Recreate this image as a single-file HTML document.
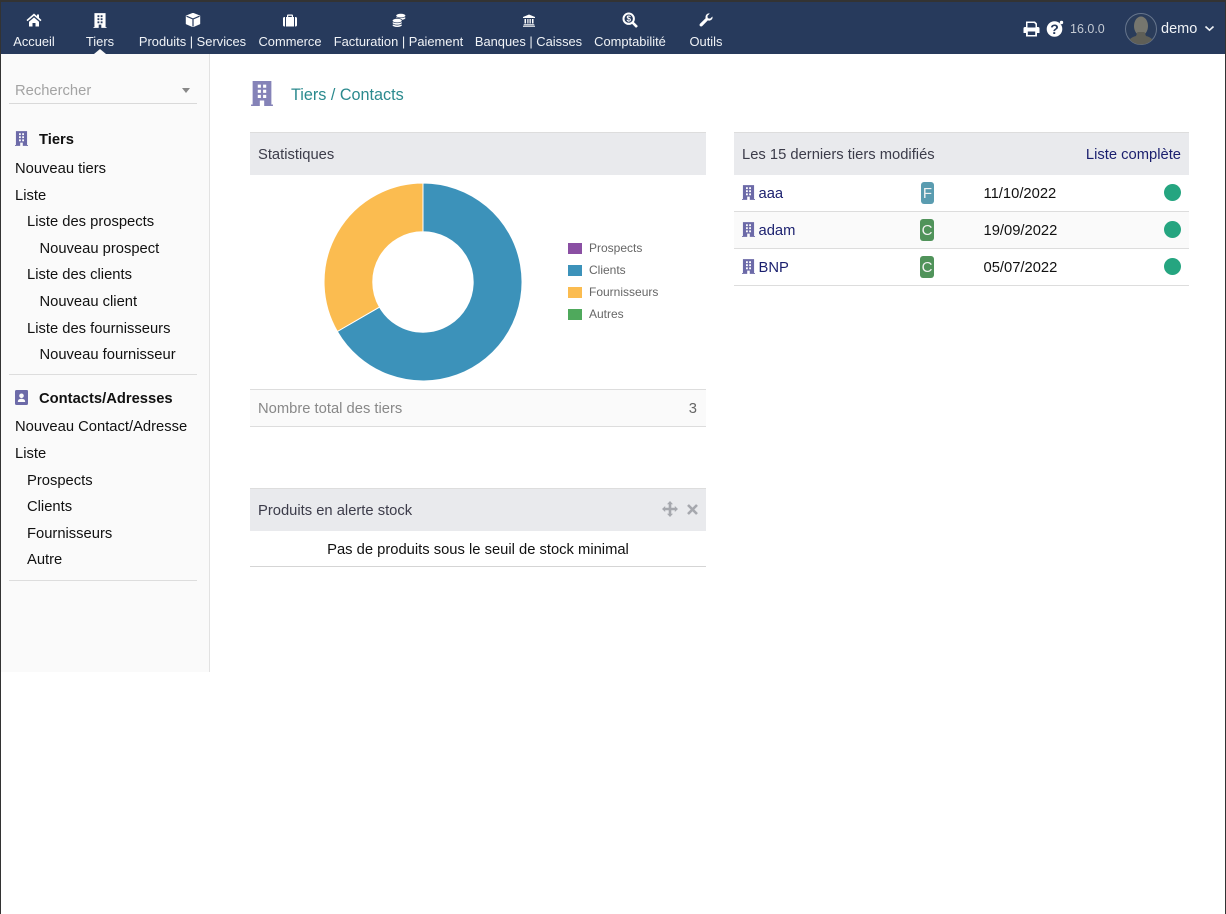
<!DOCTYPE html>
<html lang="fr"><head><meta charset="utf-8"><title>Tiers / Contacts</title>
<style>
html,body{margin:0;padding:0;background:#fff}
body{width:1226px;height:914px;position:relative;overflow:hidden;font-family:"Liberation Sans",sans-serif;font-size:14.75px;color:#111}
.a{position:absolute;white-space:nowrap}
.t{position:absolute;white-space:nowrap;line-height:20px}
.n{position:absolute;top:34px;line-height:16px;font-size:12.9px;color:#f0f3f7;text-align:center;transform:translateX(-50%);white-space:nowrap}
.i{position:absolute;top:12px;transform:translateX(-50%)}
.l{position:absolute;height:1px;background:#ddd}
.b{color:#1a1f6e}
svg{display:block}
</style></head><body>
<svg width="0" height="0" style="position:absolute"><defs>
<symbol id="bld" viewBox="0 0 14 16"><path fill-rule="evenodd" d="M1 0H13V15H14V16H0V15H1ZM4.300 2.300V4.300H6.300V2.300ZM7.700 2.300V4.300H9.700V2.300ZM4.300 5.600V7.600H6.300V5.600ZM7.700 5.600V7.600H9.700V5.600ZM4.300 8.900V10.900H6.300V8.900ZM7.700 8.900V10.900H9.700V8.900ZM5.600 12.500V16H8.400V12.500Z"/></symbol>
</defs></svg>

<!-- frame -->
<div class="a" style="left:0;top:0;width:1226px;height:54px;background:#273a5c"></div>
<div class="a" style="left:0;top:0;width:1226px;height:2px;background:#333"></div>
<div class="a" style="left:1px;top:54px;width:208px;height:618px;background:#fafafa"></div>
<div class="a" style="left:209px;top:54px;width:1px;height:618px;background:#e2e2e2"></div>
<div class="a" style="left:0;top:0;width:1px;height:914px;background:#333"></div>
<div class="a" style="left:1225px;top:0;width:1px;height:914px;background:#333"></div>

<!-- nav icons -->
<svg class="i" style="left:34px" width="16" height="16" viewBox="0 0 16 16" fill="#fff"><path d="M8 1.500L0.500 8 1.500 9.200 8 3.700 14.500 9.200 15.500 8 13 5.800V2.500H11V4.100ZM3 9.800L8 5.400 13 9.800V14.500H9.500V11H6.500V14.500H3Z"/></svg>
<svg class="i" style="left:100px;top:13px;fill:#fff" width="13" height="15"><use href="#bld"/></svg>
<svg class="i" style="left:192.500px;top:13px" width="15" height="14" viewBox="0 0 15 14"><path d="M7.500 0.300L14.200 3V10.800L7.500 13.700 0.800 10.800V3Z" fill="#fff" stroke="#fff" stroke-linejoin="round"/><path d="M1 3.200L7.500 6 14 3.200M7.500 6V13.500" fill="none" stroke="#273a5c" stroke-width="1.200"/></svg>
<svg class="i" style="left:290px;top:14px" width="14" height="13" viewBox="0 0 14 13" fill="#fff"><path fill-rule="evenodd" d="M4 3V1.500Q4 0.500 5 0.500H9Q10 0.500 10 1.500V3H11V12.500H3V3ZM5.200 1.700V3H8.800V1.700ZM0 4.500Q0 3 1.500 3H2V12.500H1.500Q0 12.500 0 11ZM12 3H12.500Q14 3 14 4.500V11Q14 12.500 12.500 12.500H12Z"/></svg>
<svg class="i" style="left:398.500px;top:13px" width="14" height="15" viewBox="0 0 14 15" fill="#fff" stroke="#273a5c" stroke-width="0.700"><ellipse cx="8.800" cy="5" rx="5" ry="2.200"/><ellipse cx="8.800" cy="2.600" rx="5" ry="2.200"/><ellipse cx="5.200" cy="12.200" rx="5" ry="2.200"/><ellipse cx="5.200" cy="9.900" rx="5" ry="2.200"/><ellipse cx="5.200" cy="7.600" rx="5" ry="2.200"/></svg>
<svg class="i" style="left:528.500px;top:14px" width="13" height="13" viewBox="0 0 13 13" fill="#fff"><path d="M6.500 0.500L12.500 3V4H0.500V3ZM2 5H3.500V9.500H2ZM4.800 5H6V9.500H4.800ZM7 5H8.300V9.500H7ZM9.500 5H11V9.500H9.500ZM1.200 10.300H11.800V11.300H1.200ZM0.500 11.800H12.500V12.800H0.500Z"/></svg>
<svg class="i" style="left:630px;top:12px" width="16" height="16" viewBox="0 0 16 16"><circle cx="6.700" cy="6.700" r="5.200" fill="none" stroke="#fff" stroke-width="2"/><path d="M10.500 10.500L15 15" stroke="#fff" stroke-width="2.600"/><text x="6.700" y="9.600" font-size="8" font-weight="700" fill="#fff" text-anchor="middle" font-family="Liberation Sans">$</text></svg>
<svg class="i" style="left:706px;top:13px" width="14" height="14" viewBox="0 0 14 14" fill="#fff"><path d="M13.500 3.500Q14 6.500 11 7.500 9.800 7.800 8.800 7.400L3.300 13Q2 14 1 13 0 12 1 10.700L6.600 5.200Q6.200 3 7.500 1.500 9 0 10.800 0.500L8.400 2.900 8.800 5.200 11.100 5.600Z"/></svg>

<!-- nav labels -->
<div class="n" style="left:34px">Accueil</div>
<div class="n" style="left:100px">Tiers</div>
<div class="n" style="left:192.500px">Produits | Services</div>
<div class="n" style="left:290px">Commerce</div>
<div class="n" style="left:398.500px">Facturation | Paiement</div>
<div class="n" style="left:528.500px">Banques | Caisses</div>
<div class="n" style="left:630px">Comptabilité</div>
<div class="n" style="left:706px">Outils</div>
<svg class="a" style="left:93px;top:49px" width="14" height="5" viewBox="0 0 14 5" fill="#fafafa"><path d="M7 0L13 5H1Z"/></svg>

<!-- top right -->
<svg class="a" style="left:1023px;top:21px" width="17" height="16" viewBox="0 0 17 16" fill="#fff"><path fill-rule="evenodd" d="M3 0.500H12L14 2.500V6H15Q16.500 6 16.500 7.500V12H14V15.500H3V12H0.500V7.500Q0.500 6 2 6H3ZM4.500 2V6.500H12.500V3.500L11.200 2ZM4.800 10.500V14H12.200V10.500Z"/></svg>
<svg class="a" style="left:1046px;top:20px" width="18" height="17" viewBox="0 0 18 17"><circle cx="8.500" cy="9" r="7.800" fill="#fff"/><circle cx="15.500" cy="2.500" r="1.700" fill="#fff"/><text x="8.500" y="13.800" font-size="14" font-weight="700" fill="#273a5c" text-anchor="middle" font-family="Liberation Sans">?</text></svg>
<div class="t" style="left:1070px;top:19px;font-size:12.500px;color:#c4cad3">16.0.0</div>
<svg class="a" style="left:1125px;top:13px" width="32" height="32" viewBox="0 0 32 32"><defs><clipPath id="c"><circle cx="16" cy="16" r="15.500"/></clipPath></defs><circle cx="16" cy="16" r="15.500" fill="#2a3c5a" stroke="#66758c"/><g clip-path="url(#c)"><ellipse cx="16" cy="13" rx="7" ry="9.500" fill="#76766e"/><path d="M2 32Q3 25 11 23L12.500 19H19.500L21 23Q29 25 30 32Z" fill="#5f5f57"/></g></svg>
<div class="t" style="left:1161px;top:19px;font-size:14.500px;color:#f0f3f7">demo</div>
<svg class="a" style="left:1204px;top:25px" width="11" height="7" viewBox="0 0 11 7"><path d="M1.500 1.500L5.500 5.200 9.500 1.500" fill="none" stroke="#f0f3f7" stroke-width="1.600"/></svg>

<!-- sidebar -->
<div class="t" style="left:15px;top:81px;color:#a3a3a3">Rechercher</div>
<svg class="a" style="left:182px;top:88px" width="8" height="5"><path d="M0 0H8L4 5Z" fill="#888"/></svg>
<div class="l" style="left:9px;top:103px;width:188px;height:1px;background:#d9d9d9"></div>

<svg class="a" style="left:15px;top:131px;fill:#6c6aa8" width="13" height="15"><use href="#bld"/></svg>
<div class="t" style="left:39px;top:130px;font-weight:700">Tiers</div>
<div class="t" style="left:15px;top:159px">Nouveau tiers</div>
<div class="t" style="left:15px;top:186px">Liste</div>
<div class="t" style="left:27px;top:212px">Liste des prospects</div>
<div class="t" style="left:39.500px;top:239px">Nouveau prospect</div>
<div class="t" style="left:27px;top:265px">Liste des clients</div>
<div class="t" style="left:39.500px;top:292px">Nouveau client</div>
<div class="t" style="left:27px;top:319px">Liste des fournisseurs</div>
<div class="t" style="left:39.500px;top:345px">Nouveau fournisseur</div>
<div class="l" style="left:9px;top:374px;width:188px"></div>

<svg class="a" style="left:15px;top:390px" width="13" height="15" viewBox="0 0 13 15"><path fill-rule="evenodd" d="M1.500 0H12Q13 0 13 1.500V13.500Q13 15 11.500 15H1.500Q0 15 0 13.500V1.500Q0 0 1.500 0ZM6.500 3.500A2.300 2.300 0 1 0 6.500 8.100 2.300 2.300 0 0 0 6.500 3.500ZM2.800 12H10.200Q10.200 8.800 6.500 8.800 2.800 8.800 2.800 12Z" fill="#6c6aa8"/></svg>
<div class="t" style="left:39px;top:389px;font-weight:700">Contacts/Adresses</div>
<div class="t" style="left:15px;top:417px">Nouveau Contact/Adresse</div>
<div class="t" style="left:15px;top:444px">Liste</div>
<div class="t" style="left:27px;top:471px">Prospects</div>
<div class="t" style="left:27px;top:497px">Clients</div>
<div class="t" style="left:27px;top:524px">Fournisseurs</div>
<div class="t" style="left:27px;top:550px">Autre</div>
<div class="l" style="left:9px;top:580px;width:188px"></div>

<!-- title -->
<svg class="a" style="left:251px;top:81px;fill:#8583b8" width="22" height="25"><use href="#bld"/></svg>
<div class="t" style="left:291px;top:85px;font-size:16.200px;color:#2b8a8e">Tiers / Contacts</div>

<!-- statistiques -->
<div class="a" style="left:250px;top:132px;width:456px;height:43px;background:#e9eaed;border-top:1px solid #ddd;box-sizing:border-box"></div>
<div class="t" style="left:258px;top:145px;color:#3c3c4a">Statistiques</div>
<svg class="a" style="left:320px;top:180px" width="206" height="204" viewBox="320 180 206 204">
<path d="M423 183A99 99 0 1 1 337.300 331.500L379.500 307.100A50.200 50.200 0 1 0 423 231.800Z" fill="#3c92ba" stroke="#fff" stroke-width="1"/>
<path d="M423 183A99 99 0 0 0 337.300 331.500L379.500 307.100A50.200 50.200 0 0 1 423 231.800Z" fill="#fbbc50" stroke="#fff" stroke-width="1"/>
</svg>
<div class="a" style="left:568px;top:243px;width:14px;height:11px;background:#8a4fa3"></div>
<div class="a" style="left:568px;top:265px;width:14px;height:11px;background:#3c92ba"></div>
<div class="a" style="left:568px;top:287px;width:14px;height:11px;background:#fbbc50"></div>
<div class="a" style="left:568px;top:309px;width:14px;height:11px;background:#4fa95c"></div>
<div class="t" style="left:589px;top:238px;font-size:12px;color:#666">Prospects</div>
<div class="t" style="left:589px;top:260px;font-size:12px;color:#666">Clients</div>
<div class="t" style="left:589px;top:282px;font-size:12px;color:#666">Fournisseurs</div>
<div class="t" style="left:589px;top:304px;font-size:12px;color:#666">Autres</div>

<div class="a" style="left:250px;top:389px;width:456px;height:38px;background:#fafafa;border-top:1px solid #ddd;border-bottom:1px solid #ddd;box-sizing:border-box"></div>
<div class="t" style="left:258px;top:399px;color:#888">Nombre total des tiers</div>
<div class="t" style="right:529px;top:399px;color:#666">3</div>

<!-- stock -->
<div class="a" style="left:250px;top:488px;width:456px;height:43px;background:#e9eaed;border-top:1px solid #ddd;box-sizing:border-box"></div>
<div class="t" style="left:258px;top:501px;color:#3c3c4a">Produits en alerte stock</div>
<svg class="a" style="left:662px;top:501px" width="16" height="16" viewBox="0 0 16 16" fill="#a6a8ae"><path d="M8 0L11 3.200H9.300V6.700H12.800V5L16 8 12.800 11V9.300H9.300V12.800H11L8 16 5 12.800H6.700V9.300H3.200V11L0 8 3.200 5V6.700H6.700V3.200H5Z"/></svg>
<svg class="a" style="left:687px;top:504px" width="11" height="11" viewBox="0 0 11 11"><path d="M1 1L10 10M10 1L1 10" stroke="#a6a8ae" stroke-width="2.600"/></svg>
<div class="t" style="left:250px;width:456px;top:540px;text-align:center">Pas de produits sous le seuil de stock minimal</div>
<div class="l" style="left:250px;top:566px;width:456px;background:#d5d5d5"></div>

<!-- derniers tiers -->
<div class="a" style="left:734px;top:132px;width:455px;height:43px;background:#e9eaed;border-top:1px solid #ddd;box-sizing:border-box"></div>
<div class="t" style="left:742px;top:145px;color:#3c3c4a">Les 15 derniers tiers modifiés</div>
<div class="t b" style="right:45px;top:145px">Liste complète</div>

<div class="a" style="left:734px;top:212px;width:455px;height:36px;background:#fafafa"></div>
<div class="l" style="left:734px;top:211px;width:455px"></div>
<div class="l" style="left:734px;top:248px;width:455px"></div>
<div class="l" style="left:734px;top:285px;width:455px"></div>

<svg class="a" style="left:741.500px;top:185px;fill:#6c6aa8" width="13" height="15"><use href="#bld"/></svg>
<svg class="a" style="left:741.500px;top:222px;fill:#6c6aa8" width="13" height="15"><use href="#bld"/></svg>
<svg class="a" style="left:741.500px;top:259px;fill:#6c6aa8" width="13" height="15"><use href="#bld"/></svg>
<div class="t b" style="left:758.500px;top:184px">aaa</div>
<div class="t b" style="left:758.500px;top:221px">adam</div>
<div class="t b" style="left:758.500px;top:258px">BNP</div>

<div class="a" style="left:921px;top:182px;width:13px;height:22px;border-radius:3px;background:#5a9cb0;color:#f2f2f2;text-align:center;line-height:24px;font-size:15px">F</div>
<div class="a" style="left:920px;top:219px;width:14px;height:22px;border-radius:3px;background:#50935a;color:#f2f2f2;text-align:center;line-height:24px;font-size:15px">C</div>
<div class="a" style="left:920px;top:256px;width:14px;height:22px;border-radius:3px;background:#50935a;color:#f2f2f2;text-align:center;line-height:24px;font-size:15px">C</div>

<div class="t" style="left:983.500px;top:184px">11/10/2022</div>
<div class="t" style="left:983.500px;top:221px">19/09/2022</div>
<div class="t" style="left:983.500px;top:258px">05/07/2022</div>

<div class="a" style="left:1164px;top:184px;width:17px;height:17px;border-radius:50%;background:#25a580"></div>
<div class="a" style="left:1164px;top:221px;width:17px;height:17px;border-radius:50%;background:#25a580"></div>
<div class="a" style="left:1164px;top:258px;width:17px;height:17px;border-radius:50%;background:#25a580"></div>
</body></html>
